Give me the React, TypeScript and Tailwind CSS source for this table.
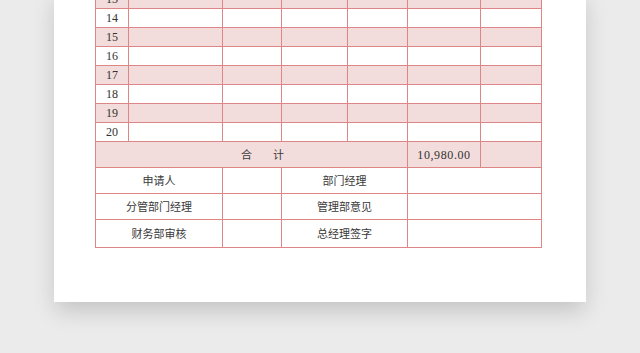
const ROWS = [13, 14, 15, 16, 17, 18, 19, 20]

// widths include the 1px right border of each cell
const COLS = ['w-[33px]', 'w-[94px]', 'w-[59px]', 'w-[66px]', 'w-[60px]', 'w-[73px]', 'w-[61px]']

const SIGN_ROWS = [
  { a: '申请人', c: '部门经理', h: 'h-[26px]' },
  { a: '分管部门经理', c: '管理部意见', h: 'h-[26px]' },
  { a: '财务部审核', c: '总经理签字', h: 'h-[28px]' },
]

const cell = 'flex shrink-0 items-center justify-center border-r border-[#de8686]'
const num = "font-['Liberation_Serif',serif] text-[12px] text-[#333]"
const cjk = "font-['Noto_Sans_CJK_SC',sans-serif] text-[11px] text-[#3a3a3a]"

export default function App() {
  return (
    <div className="h-[353px] w-[640px] overflow-hidden bg-[#ebebeb]">
      <div className="ml-[54px] w-[532px] bg-white pb-[54px] shadow-[0_10px_22px_-2px_rgba(0,0,0,0.18)]">
        <div className="ml-[41px] -mt-[10px] w-[447px] border-l border-[#de8686]">
          {ROWS.map((n) => (
            <div
              key={n}
              className={`flex h-[19px] border-b border-[#de8686] ${n % 2 ? 'bg-[#f2dcdc]' : 'bg-white'}`}
            >
              {COLS.map((w, i) => (
                <div key={i} className={`${cell} ${w}`}>
                  {i === 0 && <span className={`${num} leading-none`}>{n}</span>}
                </div>
              ))}
            </div>
          ))}

          <div className="flex h-[26px] border-b border-[#de8686] bg-[#f2dcdc]">
            <div className={`${cell} w-[312px] gap-[21px] pl-[22px]`}>
              <span className={cjk}>合</span>
              <span className={cjk}>计</span>
            </div>
            <div className={`${cell} w-[73px]`}>
              <span className={`${num} text-[11px] tracking-[0.6px]`}>10,980.00</span>
            </div>
            <div className={`${cell} w-[61px]`} />
          </div>

          {SIGN_ROWS.map((r) => (
            <div key={r.a} className={`flex ${r.h} border-b border-[#de8686] bg-white`}>
              <div className={`${cell} w-[127px]`}>
                <span className={cjk}>{r.a}</span>
              </div>
              <div className={`${cell} w-[59px]`} />
              <div className={`${cell} w-[126px]`}>
                <span className={cjk}>{r.c}</span>
              </div>
              <div className={`${cell} w-[134px]`} />
            </div>
          ))}
        </div>
      </div>
    </div>
  )
}
